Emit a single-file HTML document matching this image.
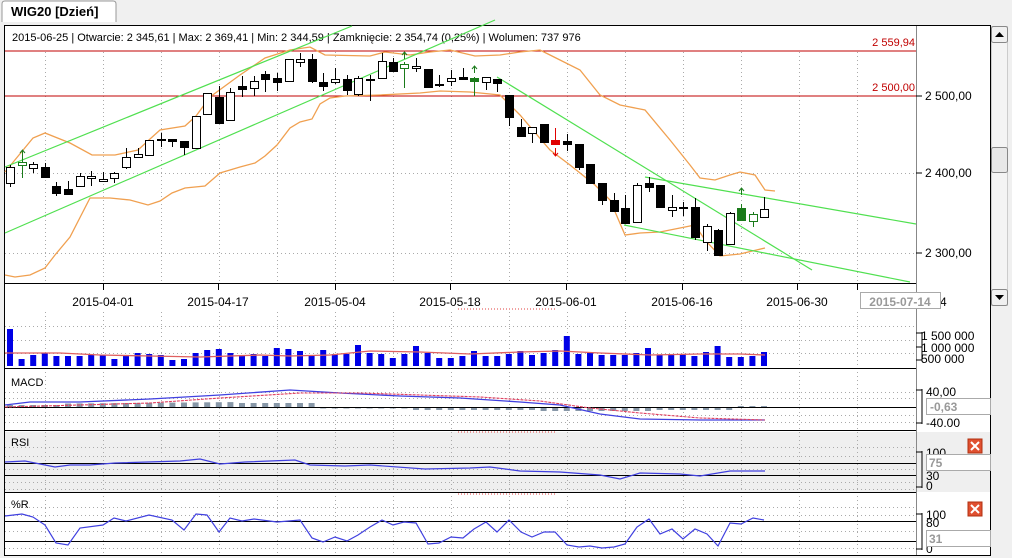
<!DOCTYPE html>
<html><head><meta charset="utf-8"><style>
body{margin:0;width:1012px;height:558px;background:#f0f0f0;overflow:hidden;font-family:"Liberation Sans",sans-serif;}
svg{position:absolute;left:0;top:0}
text{font-family:"Liberation Sans",sans-serif;font-size:12px;fill:#000}
</style></head><body>
<svg width="1012" height="558" xmlns="http://www.w3.org/2000/svg">
<rect x="0" y="0" width="1012" height="558" fill="#f0f0f0"/>
<path d="M2 22 V4 Q2 1 5 1 H113 Q116 1 116 4 V22" fill="#fff" stroke="#999"/>
<text x="11" y="16" style="font-weight:bold;font-size:13px">WIG20 [Dzień]</text>
<rect x="4.5" y="25.5" width="986" height="530" fill="#fff" stroke="#000"/>
<rect x="5" y="432" width="985" height="60" fill="#efefef"/>
<g id="grid" stroke="#aaa" stroke-dasharray="1,3"></g>
<line x1="5" y1="51" x2="916" y2="51" stroke="#c00000"/>
<line x1="5" y1="96" x2="916" y2="96" stroke="#c00000"/>
<text x="12" y="41" style="font-size:11px">2015-06-25 | Otwarcie: 2 345,61 | Max: 2 369,41 | Min: 2 344,59 | Zamknięcie: 2 354,74 (0,25%)  | Wolumen: 737 976</text>
<text x="915" y="46" text-anchor="end" style="font-size:11px;fill:#c00000">2 559,94</text>
<text x="915" y="91" text-anchor="end" style="font-size:11px;fill:#c00000">2 500,00</text>
<g stroke="#f0a050" fill="none" stroke-width="1.3">
<polyline points="5,172 33,138 45,133 70,143 92,155 115,155 138,150 150,139 160,130 185,126 196,116 210,97 240,75 265,58 290,50 310,47 325,55 370,56 385,52 410,55 430,52 450,50 475,56 500,55 520,52 540,50 550,55 580,70 600,95 620,105 645,110 670,140 690,165 700,178 715,180 730,175 740,172 755,175 765,190 775,191"/>
<polyline points="5,275 15,277 30,275 45,268 55,255 70,237 90,198 110,198 130,200 148,205 160,201 172,193 185,188 205,186 220,173 240,167 255,163 265,156 277,145 290,128 300,122 312,119 320,104 330,98 345,96 380,95 420,93 440,91 470,92 500,95 520,115 550,150 570,165 595,185 610,200 625,235 640,233 660,232 680,228 695,225 705,240 720,256 740,254 765,248"/>
</g>
<g stroke="#50e050" stroke-width="1.2">
<line x1="5" y1="233" x2="495" y2="20"/>
<line x1="5" y1="167" x2="352" y2="26"/>
<line x1="497" y1="77" x2="812" y2="270"/>
<line x1="645" y1="177" x2="916" y2="224"/>
<line x1="624" y1="225" x2="910" y2="282"/>
</g>
<g id="candles"></g>
<line x1="916.5" y1="26" x2="916.5" y2="555" stroke="#888"/>
<g stroke="#000"><line x1="916" y1="96" x2="922" y2="96"/><line x1="916" y1="173" x2="922" y2="173"/><line x1="916" y1="253" x2="922" y2="253"/>
<line x1="5" y1="283.5" x2="916" y2="283.5"/><line x1="5" y1="368.5" x2="916" y2="368.5"/><line x1="5" y1="430.5" x2="916" y2="430.5"/><line x1="5" y1="492.5" x2="916" y2="492.5"/>
<line x1="5" y1="407.5" x2="916" y2="407.5"/><line x1="5" y1="463.5" x2="916" y2="463.5"/><line x1="5" y1="475.5" x2="916" y2="475.5"/><line x1="5" y1="521.5" x2="916" y2="521.5"/><line x1="5" y1="541.5" x2="916" y2="541.5"/></g>
<g style="font-size:12px">
<text x="925" y="100">2 500,00</text><text x="925" y="177">2 400,00</text><text x="925" y="257">2 300,00</text>
</g>
<g id="ticks" stroke="#000"></g>
<g text-anchor="middle">
<text x="103" y="306">2015-04-01</text><text x="218" y="306">2015-04-17</text><text x="335" y="306">2015-05-04</text><text x="450" y="306">2015-05-18</text><text x="566" y="306">2015-06-01</text><text x="682" y="306">2015-06-16</text><text x="797" y="306">2015-06-30</text></g>
<text x="940" y="306">4</text>
<rect x="860.5" y="292.5" width="80" height="16" fill="#fff" stroke="#aaa"/>
<text x="900" y="306" text-anchor="middle" style="fill:#999;font-weight:bold">2015-07-14</text>
<line x1="458" y1="309" x2="556" y2="309" stroke="#e04040" stroke-dasharray="1,2"/>
<line x1="458" y1="432" x2="556" y2="432" stroke="#e04040" stroke-dasharray="1,2"/>
<line x1="458" y1="494" x2="556" y2="494" stroke="#e04040" stroke-dasharray="1,2"/>
<g id="vol" fill="#0000e6"></g>
<polyline points="5,353 60,353 100,355 150,356 200,357 260,355 290,356 330,355 370,351 420,352 470,354 520,352 560,351 600,353 650,355 700,354 740,354 765,355" fill="none" stroke="#e06060" stroke-width="1.3"/>
<g style="font-size:12px"><text x="921" y="340">1 500 000</text><text x="921" y="352">1 000 000</text><text x="921" y="363">500 000</text></g>
<g stroke="#000"><path d="M922 332 V361 M916 333 H922 M916 347 H922 M916 360 H922"/></g>
<text x="11" y="386" style="font-size:11px">MACD</text>
<g id="hist" fill="#8898a8"></g>
<polyline points="5,405 30,402 80,402 150,399 220,395 290,390 340,393 400,396 460,398 520,402 560,405 600,414 640,419 700,420 765,420" fill="none" stroke="#4040e0" stroke-width="1.3"/>
<polyline points="5,407 80,405 150,403 220,398 300,393 360,393 420,395 480,397 540,401 590,408 640,413 700,418 765,420" fill="none" stroke="#e04060" stroke-width="1.1" stroke-dasharray="3,1"/>
<g style="font-size:12px"><text x="926" y="396">40,00</text><text x="926" y="427">-40.00</text></g>
<path d="M922 389 V424 M916 390 H922 M916 423 H922" stroke="#000"/>
<rect x="926.5" y="398.5" width="64" height="16" fill="#fff" stroke="#aaa"/><text x="930" y="411" style="fill:#999;font-weight:bold">-0,63</text>
<text x="11" y="446" style="font-size:11px">RSI</text>
<polyline points="5,462 25,461 55,467 70,465 90,465 115,463 180,461 200,459 220,464 245,462 295,460 310,465 345,466 370,465 425,469 470,468 490,467 520,471 560,472 600,475 620,479 640,473 680,474 700,476 730,471 765,471" fill="none" stroke="#4040e0" stroke-width="1.2"/>
<g style="font-size:12px"><text x="926" y="457">100</text><text x="926" y="480">30</text><text x="926" y="490">0</text></g>
<path d="M922 451 V488 M916 452 H922 M916 487 H922" stroke="#000"/>
<rect x="926.5" y="454.5" width="64" height="16" fill="#fff" stroke="#aaa"/><text x="929" y="467" style="fill:#999;font-weight:bold">75</text>
<text x="11" y="508" style="font-size:11px">%R</text>
<polyline points="5,516 22,514 33,517 45,525 56,543 68,545 80,528 103,525 114,518 126,521 149,515 172,520 184,530 196,514 207,515 219,532 230,518 242,521 254,519 277,522 300,520 312,538 323,542 335,537 347,541 358,535 370,527 382,520 393,525 404,522 416,523 428,544 439,543 451,537 463,538 474,529 486,522 497,532 509,520 521,532 532,537 544,532 555,532 567,545 579,547 590,546 602,548 614,547 625,544 637,527 649,519 660,534 672,529 683,539 695,529 707,534 718,546 730,523 741,524 753,518 764,520" fill="none" stroke="#4040e0" stroke-width="1.2"/>
<g style="font-size:12px"><text x="926" y="519">100</text><text x="926" y="527">80</text><text x="926" y="553">0</text></g>
<path d="M922 513 V550 M916 514 H922 M916 549 H922" stroke="#000"/>
<rect x="926.5" y="530.5" width="64" height="16" fill="#fff" stroke="#aaa"/><text x="929" y="543" style="fill:#999;font-weight:bold">31</text>
<g><rect x="968" y="439" width="14" height="14" fill="#e05030" stroke="#b03010"/><path d="M971 442 L979 450 M979 442 L971 450" stroke="#fff" stroke-width="2"/></g>
<g><rect x="968" y="502" width="14" height="14" fill="#e05030" stroke="#b03010"/><path d="M971 505 L979 513 M979 505 L971 513" stroke="#fff" stroke-width="2"/></g>
<rect x="991.5" y="26.5" width="16" height="279" fill="#f4f4f4" stroke="#ccc"/>
<rect x="991.5" y="26.5" width="16" height="16" fill="#f0f0f0" stroke="#888" rx="2"/><path d="M995 37 L999.5 32 L1004 37Z" fill="#000"/>
<rect x="991.5" y="289.5" width="16" height="16" fill="#f0f0f0" stroke="#888" rx="2"/><path d="M995 295 L999.5 300 L1004 295Z" fill="#000"/>
<rect x="991.5" y="147.5" width="16" height="25" fill="#e8e8e8" stroke="#888" rx="2"/>
</svg>
<script>
var NS="http://www.w3.org/2000/svg";
function el(p,t,a){var e=document.createElementNS(NS,t);for(var k in a)e.setAttribute(k,a[k]);document.getElementById(p).appendChild(e);return e;}
[45,103,161,219,277,335,393,451,509,567,625,683,741,799,857].forEach(function(x){el("grid","line",{x1:x+.5,y1:52,x2:x+.5,y2:283});el("grid","line",{x1:x+.5,y1:312,x2:x+.5,y2:555});});
[173,253,326,340,353,392,398,415,422,447,456,469,482,489,507,515,531,548].forEach(function(y){el("grid","line",{x1:5,y1:y+.5,x2:916,y2:y+.5});});
[103,218,335,450,566,682,797,857].forEach(function(x){el("ticks","line",{x1:x+.5,y1:283,x2:x+.5,y2:290});});
var C=[[10,167,183,165,187,0],[22,162,165,157,178,2],[33,164,168,162,173,0],[45,167,177,163,177,1],[56,186,193,182,196,1],[68,189,194,181,194,1],[80,176,186,173,186,0],[91,176,178,171,186,0],[103,179,181,172,182,0],[114,173,178,172,183,0],[126,157,167,148,169,0],[138,154,157,148,158,0],[149,140,155,140,155,0],[161,139,140,133,147,1],[172,139,141,139,147,1],[184,141,147,141,155,1],[196,116,148,116,148,0],[207,93,114,93,114,0],[219,97,123,86,123,1],[230,92,120,88,120,0],[242,86,89,76,97,1],[254,81,88,76,96,0],[265,74,79,71,92,1],[277,78,82,73,91,1],[289,59,81,59,82,0],[300,59,62,53,67,0],[312,59,81,54,83,1],[323,82,86,73,91,1],[335,79,82,68,84,0],[347,79,90,75,95,1],[358,78,94,76,96,0],[370,79,80,75,101,1],[382,61,78,53,78,0],[393,62,71,58,71,1],[404,64,68,62,88,2],[416,66,68,58,72,0],[428,69,87,69,87,1],[439,84,85,75,87,1],[451,78,81,70,86,0],[463,77,79,68,79,1],[474,78,81,77,96,3],[486,77,82,77,90,0],[497,79,83,79,92,1],[509,95,117,95,126,1],[521,127,136,119,137,1],[532,127,133,127,143,0],[544,124,142,124,142,1],[555,140,144,128,144,4],[567,141,144,134,151,1],[579,144,167,144,170,1],[590,164,183,164,183,1],[602,183,200,183,205,1],[614,200,211,193,211,1],[625,208,223,195,223,1],[637,185,222,183,223,0],[649,183,187,177,192,1],[660,185,207,185,207,1],[672,207,210,195,217,0],[683,207,208,202,216,1],[695,207,237,198,240,1],[707,226,242,224,251,0],[718,230,255,229,255,1],[730,213,244,212,244,0],[741,208,220,204,220,3],[753,214,221,212,227,2],[764,209,217,197,217,0]];
C.forEach(function(c){var col=c[5]>=2?(c[5]==4?"#e00000":"#1a7a1a"):"#000";
el("candles","line",{x1:c[0]+.5,y1:c[3],x2:c[0]+.5,y2:c[4],stroke:col});
var fill=(c[5]==1||c[5]==3||c[5]==4)?col:"#fff";var h=Math.max(c[2]-c[1],1);
el("candles","rect",{x:c[0]-3.5,y:c[1]+.5,width:8,height:h,fill:fill,stroke:col});});
[[22,150,"#1a7a1a"],[404,52,"#1a7a1a"],[474,66,"#1a7a1a"],[741,188,"#1a7a1a"]].forEach(function(a){el("candles","path",{d:"M"+(a[0]+.5)+" "+(a[1]+7)+" V"+a[1]+" M"+(a[0]-2)+" "+(a[1]+3)+" L"+(a[0]+.5)+" "+a[1]+" L"+(a[0]+3)+" "+(a[1]+3),stroke:a[2],fill:"none"});});
el("candles","path",{d:"M555.5 148 V156 M553 153 L555.5 156 L558 153",stroke:"#e00000",fill:"none"});
var V=[37,7,11,13,10,10,10,11,11,7,11,13,12,11,6,7,13,16,17,13,11,12,10,18,17,15,11,16,12,12,21,13,12,8,12,20,13,8,8,10,15,10,10,12,15,11,13,16,30,12,13,11,11,11,13,18,11,11,12,10,14,20,9,9,10,14];
V.forEach(function(h,i){var x=10+i*11.6;el("vol","rect",{x:x-3,y:366-h,width:6,height:h});});
for(var i=0;i<66;i++){var x=10+i*11.6;var v=i<27?(i<5?2:(i<20?3+i*0.1:4)):(i<35?-0.5:-2);if(i>45)v=-3;if(i>55)v=-2;if(i>62)v=1;
el("hist","rect",{x:x-3,y:v>0?407-v:408,width:6,height:Math.abs(v)});}
</script>
</body></html>
